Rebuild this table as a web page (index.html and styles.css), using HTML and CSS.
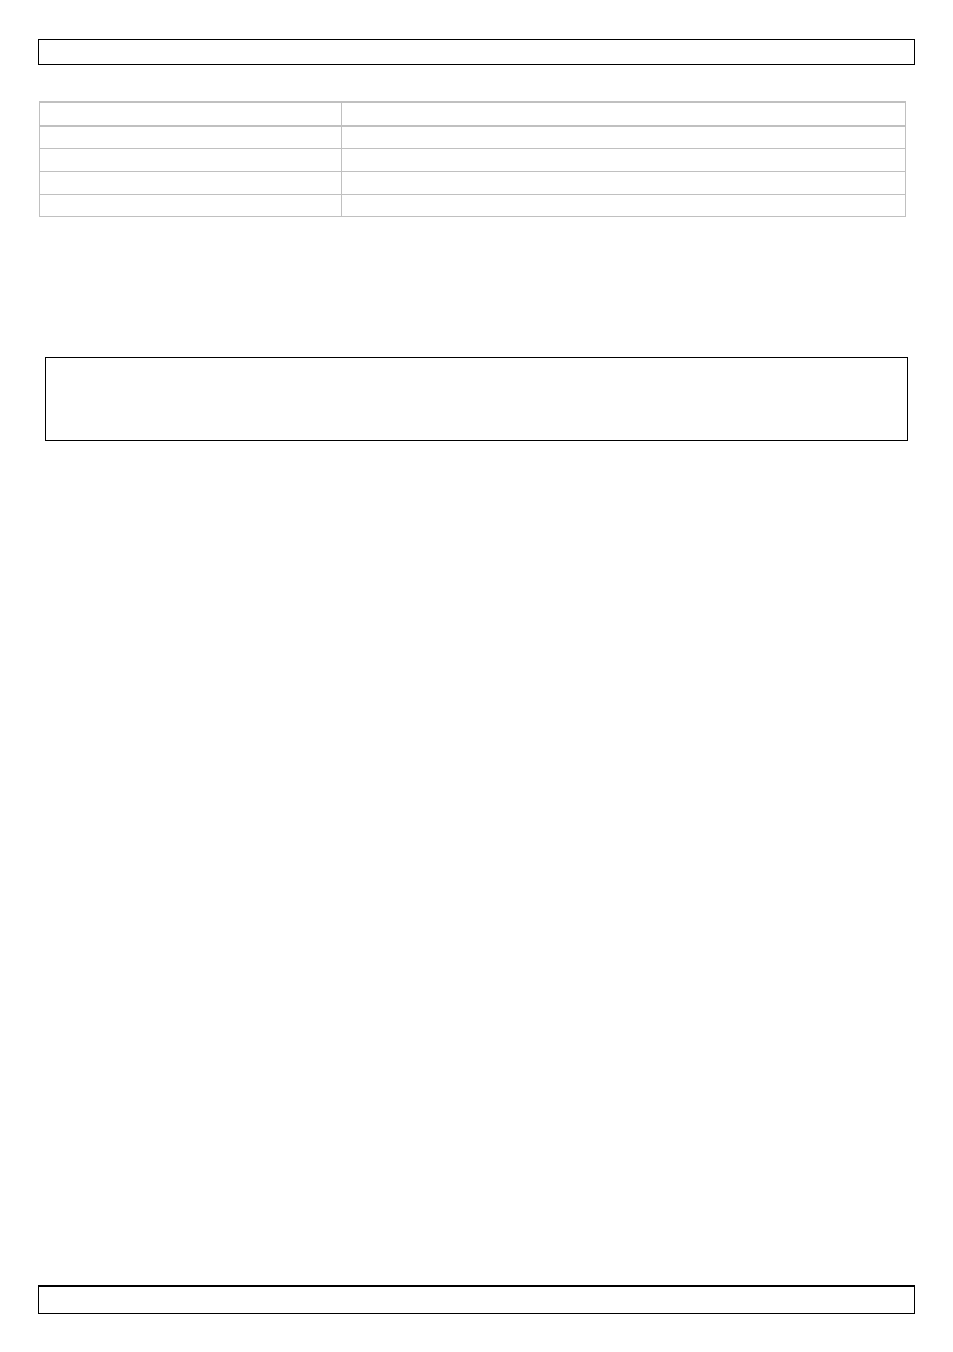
FILE: index.html
```html
<!DOCTYPE html>
<html lang="en">
<head>
  <meta charset="UTF-8" />
  <meta name="viewport" content="width=device-width, initial-scale=1.0"/>
  <title>Manual page</title>
  <link rel="stylesheet" href="styles.css">
</head>
<body>
  <div class="page">
    <!-- HEADER BAR -->
    <header class="page-head"></header>

    <!-- SPEC TABLE -->
    <section class="spec" aria-label="Specifications">
      <div class="spec-row spec-head"><div class="cell key"></div><div class="cell"></div></div>
      <div class="spec-row short"><div class="cell key"></div><div class="cell"></div></div>
      <div class="spec-row"><div class="cell key"></div><div class="cell"></div></div>
      <div class="spec-row"><div class="cell key"></div><div class="cell"></div></div>
      <div class="spec-row"><div class="cell key"></div><div class="cell"></div></div>
    </section>

    <!-- NOTICE -->
    <div class="notice"></div>

    <!-- FOOTER BAR -->
    <footer class="page-foot"></footer>
  </div>
</body>
</html>
```

FILE: styles.css
```css
/* RESET & BASE */
* { margin:0; padding:0; box-sizing:border-box; }
html, body { background:#fff; color:#000; font-family:'Liberation Sans',Arial,sans-serif; font-size:12px; }

/* PAGE */
.page {
  display:flex; flex-direction:column;
  min-height:1352px;
}

/* HEADER / FOOTER BARS */
.page-head {
  margin:39px 0 0 38px; width:877px; height:26px;
  border:1px solid #000;
}
.page-foot {
  margin:auto 0 38px 38px; width:877px; height:29px;
  border:1px solid #000; border-top-width:2px;
}

/* SPEC TABLE */
.spec {
  margin:36px 0 0 39px; width:867px;
  border:1px solid #c0c0c0; border-top-width:2px;
}
.spec-row {
  display:grid; grid-template-columns:302px 1fr;
  height:23px; border-bottom:1px solid #c0c0c0;
}
.spec-row.short { height:22px; }
.spec-row:last-child { border-bottom:none; height:21px; }
.spec-head { height:24px; border-bottom-width:2px; }
.cell.key { border-right:1px solid #c0c0c0; }

/* NOTICE BOX */
.notice {
  margin:140px 0 0 45px; width:863px; height:84px;
  border:1px solid #000;
}
```
